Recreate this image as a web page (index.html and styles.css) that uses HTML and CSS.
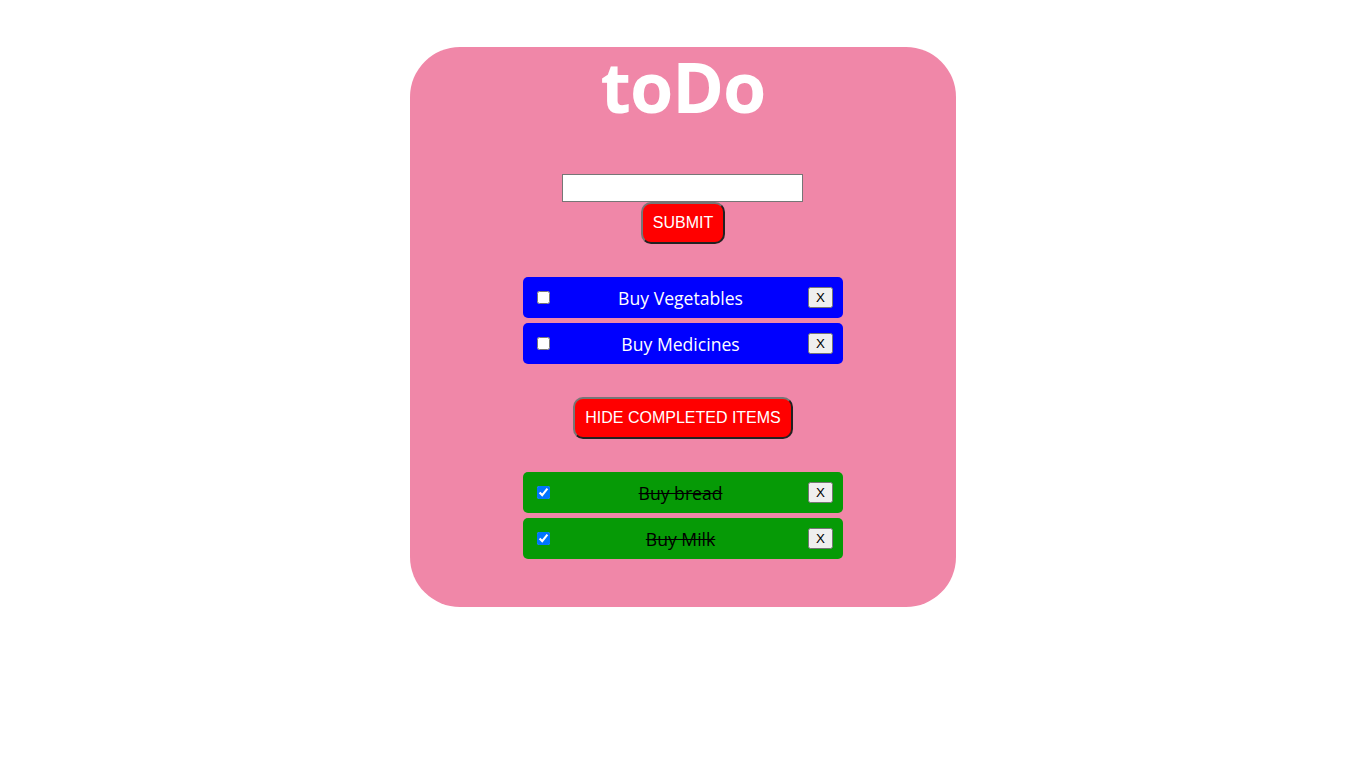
FILE: index.html
```html
<!DOCTYPE html>
<html lang="en">
<head>
    <meta charset="UTF-8">
    <meta name="viewport" content="width=device-width, initial-scale=1.0">
    <title>toDo</title>
    <link rel="stylesheet" href="styles.css">
</head>
<body>

    <div class="container">
        <h1>toDo</h1>

        <form class="add-form">
            <input type="text" id="newItem">
            <button type="button" class="red-btn">SUBMIT</button>
        </form>

        <ul class="list">
            <li class="item">
                <input type="checkbox">
                <span class="item-text">Buy Vegetables</span>
                <button class="remove">X</button>
            </li>
            <li class="item">
                <input type="checkbox">
                <span class="item-text">Buy Medicines</span>
                <button class="remove">X</button>
            </li>
        </ul>

        <button class="red-btn">HIDE COMPLETED ITEMS</button>

        <ul class="list">
            <li class="item done">
                <input type="checkbox" checked>
                <span class="item-text">Buy bread</span>
                <button class="remove">X</button>
            </li>
            <li class="item done">
                <input type="checkbox" checked>
                <span class="item-text">Buy Milk</span>
                <button class="remove">X</button>
            </li>
        </ul>
    </div>

</body>
</html>
```

FILE: styles.css
```css
body {
    margin: 0;
    padding: 0;
    background-color: white;
    font-family: "Open Sans", "Noto Sans", sans-serif;
}

.container {
    width: 40%;
    height: 560px;
    margin: 47px auto 0;
    background-color: #f087a8;
    border-radius: 50px;
    box-sizing: border-box;
    display: flex;
    flex-direction: column;
    align-items: center;
}

h1 {
    margin: 0;
    color: white;
    font-size: 70px;
    font-weight: bold;
    line-height: 78px;
    letter-spacing: -1px;
}

.add-form {
    margin-top: 49px;
    display: flex;
    flex-direction: column;
    align-items: center;
}

.add-form input {
    width: 241px;
    height: 28px;
    box-sizing: border-box;
    border: 1px solid #767676;
    margin: 0;
}

.red-btn {
    background-color: red;
    color: white;
    font-family: "Liberation Sans", Arial, sans-serif;
    font-size: 16px;
    line-height: 18px;
    padding: 10px;
    border: 2px outset #767676;
    border-radius: 10px;
    cursor: pointer;
}

.list {
    list-style: none;
    margin: 33px 0;
    padding: 0;
    width: 320px;
    display: flex;
    flex-direction: column;
    gap: 5px;
}

.item {
    height: 41px;
    padding: 0 10px;
    box-sizing: border-box;
    background-color: blue;
    border-radius: 5px;
    display: flex;
    align-items: center;
    justify-content: space-between;
    color: white;
    font-size: 17.6px;
}

.item input {
    margin: 3px 3px 3px 4px;
}

.done {
    background-color: #069a06;
    color: black;
}

.done .item-text {
    text-decoration: line-through;
}

.remove {
    font-family: "Liberation Sans", Arial, sans-serif;
    font-size: 13.33px;
    padding: 1px 6px;
}
```
